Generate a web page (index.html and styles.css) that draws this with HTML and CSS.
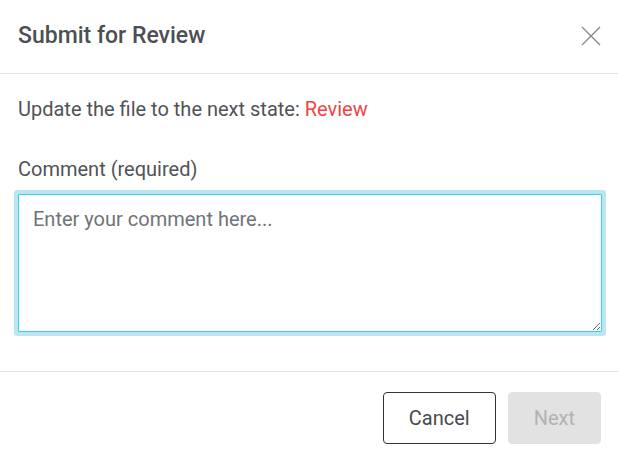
FILE: index.html
```html
<!DOCTYPE html>
<html lang="en">

<head>
    <meta charset="UTF-8" />
    <meta name="viewport" content="width=device-width, initial-scale=1.0" />
    <link rel="stylesheet" href="styles.css">
    <title>Submit for Review</title>
</head>

<body>
    <div class="modal">
        <div class="modal-header">
            <h2 class="modal-title">Submit for Review</h2>
            <button class="close-btn" aria-label="Close">
                <svg width="20" height="20" viewBox="0 0 20 20">
                    <path d="M1 1 L19 19 M19 1 L1 19" stroke="#8a8a8a" stroke-width="1.4" fill="none" />
                </svg>
            </button>
        </div>
        <div class="modal-body">
            <p class="state-text">Update the file to the next state: <span class="state">Review</span></p>
            <label class="field-label" for="comment">Comment (required)</label>
            <textarea id="comment" class="comment focused" placeholder="Enter your comment here..."></textarea>
        </div>
        <div class="modal-footer">
            <button class="btn btn-outline">Cancel</button>
            <button class="btn btn-disabled" disabled>Next</button>
        </div>
    </div>
</body>

</html>
```

FILE: styles.css
```css
body {
    margin: 0;
    font-family: Roboto, "Liberation Sans", Arial, sans-serif;
    color: #505357;
    background: #ffffff;
}

.modal {
    width: 618px;
}

.modal-header {
    display: flex;
    align-items: center;
    justify-content: space-between;
    padding: 22px 17px 23px 18px;
    border-bottom: 1px solid #e3e3e3;
}

.modal-title {
    margin: 0;
    font-size: 23px;
    font-weight: 500;
    line-height: 28px;
    color: #4c4f54;
}

.close-btn {
    border: none;
    background: none;
    padding: 0;
    width: 20px;
    height: 20px;
    display: flex;
    cursor: pointer;
}

.modal-body {
    padding: 20px 16px 39px 18px;
}

.state-text {
    margin: 0;
    font-size: 20px;
    line-height: 30px;
}

.state {
    color: #ef4444;
}

.field-label {
    display: block;
    margin-top: 30px;
    font-size: 20px;
    line-height: 30px;
}

.comment {
    display: block;
    width: 100%;
    height: 138px;
    margin-top: 10px;
    padding: 9px 14px;
    box-sizing: border-box;
    font-family: Roboto, "Liberation Sans", Arial, sans-serif;
    font-size: 20px;
    line-height: 30px;
    color: #505357;
    border: 1px solid #d0d0d0;
    border-radius: 1px;
    outline: none;
}

.comment::placeholder {
    color: #6f747a;
}

.comment.focused {
    border-color: #2fd3f7;
    box-shadow: 0 0 0 4px #bde5f0;
}

.modal-footer {
    display: flex;
    justify-content: flex-end;
    gap: 12px;
    padding: 20px 17px 18px 18px;
    border-top: 1px solid #e3e3e3;
}

.btn {
    height: 52px;
    padding: 0 25px;
    font-family: Roboto, "Liberation Sans", Arial, sans-serif;
    font-size: 20px;
    border-radius: 4px;
}

.btn-outline {
    background: #ffffff;
    border: 1px solid #333333;
    color: #474a4f;
}

.btn-disabled {
    background: #e2e2e2;
    border: 1px solid #e2e2e2;
    color: #b2b2b2;
}
```
